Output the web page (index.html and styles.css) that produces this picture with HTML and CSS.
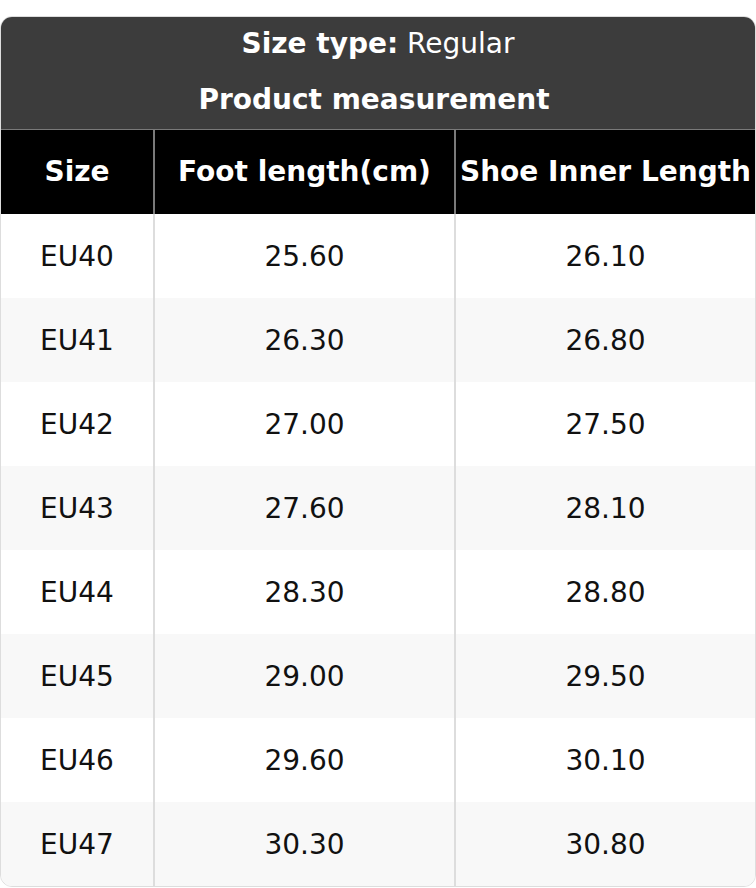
FILE: index.html
```html
<!DOCTYPE html>
<html lang="en">
<head>
<meta charset="utf-8">
<title>Size chart</title>
<link rel="stylesheet" href="styles.css">
</head>
<body>
<div class="chart">
  <div class="caption">
    <div class="caption-line"><b>Size type:</b> Regular</div>
    <div class="caption-line caption-sub"><b>Product measurement</b></div>
  </div>
  <div class="grid head">
    <div class="cell">Size</div>
    <div class="cell">Foot length(cm)</div>
    <div class="cell">Shoe Inner Length</div>
  </div>
  <div class="grid row"><div class="cell">EU40</div><div class="cell">25.60</div><div class="cell">26.10</div></div>
  <div class="grid row alt"><div class="cell">EU41</div><div class="cell">26.30</div><div class="cell">26.80</div></div>
  <div class="grid row"><div class="cell">EU42</div><div class="cell">27.00</div><div class="cell">27.50</div></div>
  <div class="grid row alt"><div class="cell">EU43</div><div class="cell">27.60</div><div class="cell">28.10</div></div>
  <div class="grid row"><div class="cell">EU44</div><div class="cell">28.30</div><div class="cell">28.80</div></div>
  <div class="grid row alt"><div class="cell">EU45</div><div class="cell">29.00</div><div class="cell">29.50</div></div>
  <div class="grid row"><div class="cell">EU46</div><div class="cell">29.60</div><div class="cell">30.10</div></div>
  <div class="grid row alt"><div class="cell">EU47</div><div class="cell">30.30</div><div class="cell">30.80</div></div>
</div>
</body>
</html>
```
FILE: styles.css
```css
html, body {
  margin: 0;
  padding: 0;
  background: #ffffff;
}
body {
  padding-top: 16px;
  font-family: "DejaVu Sans", "Liberation Sans", sans-serif;
  font-size: 28px;
  color: #111111;
}
.chart {
  width: 756px;
  box-sizing: border-box;
  border: 1px solid #dddddd;
  border-radius: 12px;
  overflow: hidden;
  background: #ffffff;
}
.caption {
  background: #3c3c3c;
  color: #ffffff;
  text-align: center;
}
.caption-line {
  height: 56px;
  line-height: 54px;
  white-space: nowrap;
}
.caption-sub {
  padding-right: 8px;
}
.caption-line b {
  font-weight: bold;
}
.grid {
  display: grid;
  grid-template-columns: 152px 301px 301px;
  height: 84px;
}
.cell {
  display: flex;
  align-items: center;
  justify-content: center;
  white-space: nowrap;
}
.cell + .cell {
  border-left: 2px solid #dddddd;
}
.head {
  background: #000000;
  color: #ffffff;
  font-weight: bold;
  border-top: 1px solid #7a7a7a;
}
.head .cell {
  padding-bottom: 2px;
  box-sizing: border-box;
}
.head .cell + .cell {
  border-left-color: #7a7a7a;
}
.row {
  background: #ffffff;
}
.row.alt {
  background: #f8f8f8;
}
```
